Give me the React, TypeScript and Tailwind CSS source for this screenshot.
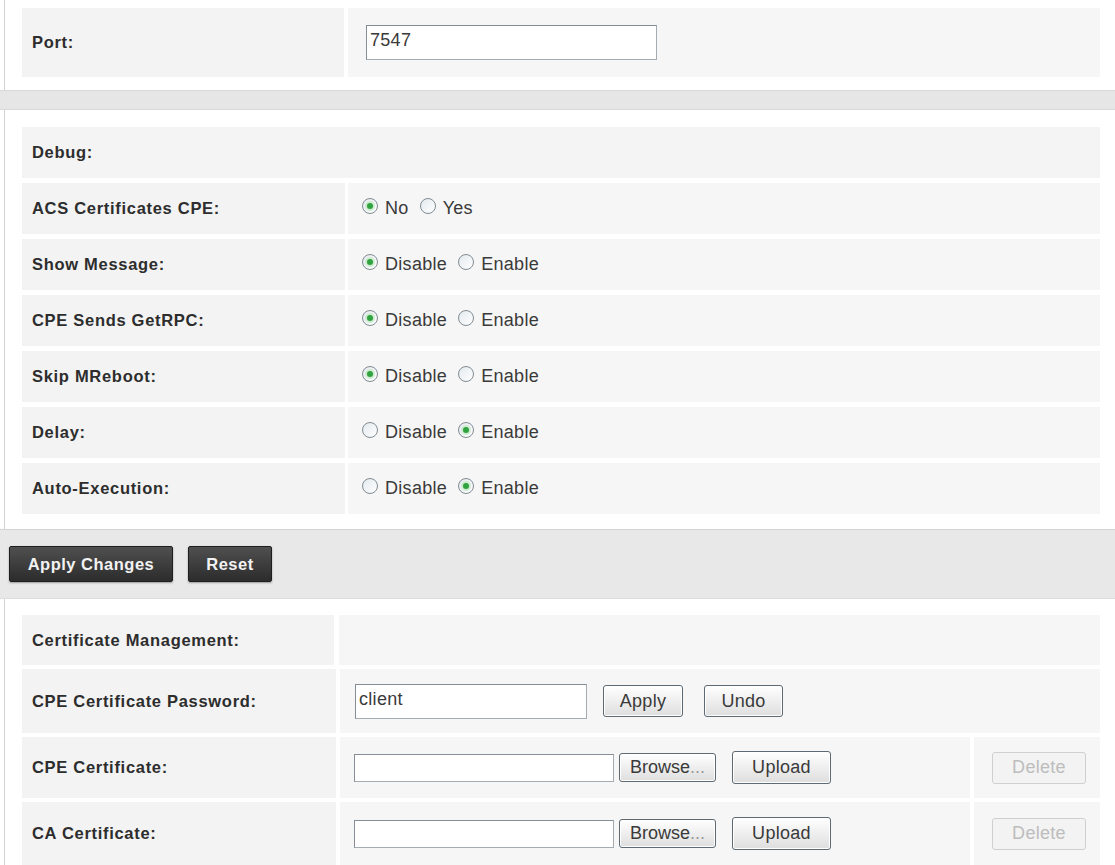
import React from 'react';

const font = "font-['Liberation_Sans',Arial,sans-serif]";
const labelText = 'font-bold text-[16.5px] tracking-[0.7px] text-[#2d2d2d]';
const valueText = 'text-[18px] tracking-[0.3px] text-[#3a3a3a]';

const Radio = ({ checked }: { checked?: boolean }) => (
  <span className="inline-flex w-[16px] h-[16px] shrink-0 -translate-y-[3px] items-center justify-center rounded-full border border-[#7f8b93] bg-gradient-to-br from-[#e4eaee] to-white">
    {checked && <span className="w-[6px] h-[6px] rounded-full bg-[#2ea43f] shadow-[0_0_0_2px_#cfeacf]" />}
  </span>
);

const RadioPair = ({ a, b, first }: { a: string; b: string; first: boolean }) => (
  <div className={`flex items-center ${valueText}`}>
    <Radio checked={first} />
    <span className="ml-[7px] mr-[11px]">{a}</span>
    <Radio checked={!first} />
    <span className="ml-[7px]">{b}</span>
  </div>
);

const TextBox = ({ value, className }: { value?: string; className: string }) => (
  <div className={`flex items-center bg-white border border-[#a4acb3] border-t-[#858e96] border-l-[#858e96] pl-[3px] pb-[4px] ${valueText} ${className}`}>
    {value}
  </div>
);

const GreyButton = ({ children, className }: { children: React.ReactNode; className: string }) => (
  <button className={`flex items-center justify-center rounded-[3px] border border-[#5e6a73] bg-gradient-to-b from-white to-[#dedede] shadow-[inset_0_0_0_1px_#ffffff] ${valueText} text-[#2b2b2b] ${className}`}>
    {children}
  </button>
);

const DeleteButton = () => (
  <button className={`flex items-center justify-center w-[94px] h-[32px] rounded-[3px] border border-[#cfcfcf] bg-[#f3f3f3] ${valueText} text-[#bdbdbd]`}>
    Delete
  </button>
);

const DarkButton = ({ children, className }: { children: React.ReactNode; className: string }) => (
  <button className={`flex items-center justify-center h-[36px] rounded-[2px] border border-[#1e1e1e] bg-gradient-to-b from-[#505050] to-[#2c2c2c] shadow-[0_1px_2px_rgba(0,0,0,0.35)] font-bold text-[16.5px] tracking-[0.5px] text-[#f2f2f2] ${className}`}>
    {children}
  </button>
);

const debugRows: { label: string; a: string; b: string; first: boolean }[] = [
  { label: 'ACS Certificates CPE:', a: 'No', b: 'Yes', first: true },
  { label: 'Show Message:', a: 'Disable', b: 'Enable', first: true },
  { label: 'CPE Sends GetRPC:', a: 'Disable', b: 'Enable', first: true },
  { label: 'Skip MReboot:', a: 'Disable', b: 'Enable', first: true },
  { label: 'Delay:', a: 'Disable', b: 'Enable', first: false },
  { label: 'Auto-Execution:', a: 'Disable', b: 'Enable', first: false },
];

const FileRow = ({ label, h }: { label: string; h: string }) => (
  <div className={`flex gap-[4px] ${h}`}>
    <div className={`w-[314px] bg-[#f3f3f3] flex items-center pl-[10px] ${labelText}`}>{label}</div>
    <div className="w-[630px] bg-[#f6f6f6] flex items-center pl-[14px]">
      <TextBox className="w-[260px] h-[28px]" />
      <GreyButton className="ml-[5px] w-[97px] h-[29px] text-[17px] tracking-[0px]">
        Browse<span className="text-[#9a9a9a]">...</span>
      </GreyButton>
      <GreyButton className="ml-[16px] w-[99px] h-[33px]">Upload</GreyButton>
    </div>
    <div className="flex-1 bg-[#f6f6f6] flex items-center pl-[18px]">
      <DeleteButton />
    </div>
  </div>
);

export default function App() {
  return (
    <div className={`w-[1115px] h-[865px] overflow-hidden bg-white ${font}`}>
      {/* Port */}
      <div className="ml-[4px] border-l border-[#d4d4d4] pl-[17px] pr-[15px] pt-[8px] pb-[13px]">
        <div className="flex gap-[4px] h-[69px]">
          <div className={`w-[322px] bg-[#f3f3f3] flex items-center pl-[10px] ${labelText}`}>Port:</div>
          <div className="flex-1 bg-[#f6f6f6] flex items-center pl-[18px]">
            <TextBox value="7547" className="w-[291px] h-[35px]" />
          </div>
        </div>
      </div>

      <div className="h-[20px] bg-[#e6e6e6] border-y border-[#d9d9d9]" />

      {/* Debug */}
      <div className="ml-[4px] border-l border-[#d4d4d4] pl-[17px] pr-[15px] pt-[17px] pb-[15px] flex flex-col gap-[5px]">
        <div className={`h-[51px] bg-[#f4f4f4] flex items-center pl-[10px] ${labelText}`}>Debug:</div>
        {debugRows.map((r) => (
          <div key={r.label} className="flex gap-[3px] h-[51px]">
            <div className={`w-[323px] bg-[#f3f3f3] flex items-center pl-[10px] ${labelText}`}>{r.label}</div>
            <div className="flex-1 bg-[#f6f6f6] flex items-center pl-[14px]">
              <RadioPair a={r.a} b={r.b} first={r.first} />
            </div>
          </div>
        ))}
      </div>

      {/* Buttons */}
      <div className="h-[70px] bg-[#e8e8e8] border-t border-[#d3d3d3] border-b border-b-[#dedede] flex items-start pt-[16px] pl-[9px] gap-[15px]">
        <DarkButton className="w-[164px]">Apply Changes</DarkButton>
        <DarkButton className="w-[84px]">Reset</DarkButton>
      </div>

      {/* Certificates */}
      <div className="ml-[4px] border-l border-[#d4d4d4] pl-[17px] pr-[15px] pt-[16px] flex flex-col gap-[4px]">
        <div className="flex gap-[5px] h-[50px]">
          <div className={`w-[312px] bg-[#f3f3f3] flex items-center pl-[10px] ${labelText}`}>Certificate Management:</div>
          <div className="flex-1 bg-[#f6f6f6]" />
        </div>
        <div className="flex gap-[4px] h-[64px]">
          <div className={`w-[314px] bg-[#f3f3f3] flex items-center pl-[10px] ${labelText}`}>CPE Certificate Password:</div>
          <div className="flex-1 bg-[#f6f6f6] flex items-center pl-[15px]">
            <TextBox value="client" className="w-[232px] h-[35px]" />
            <GreyButton className="ml-[16px] w-[80px] h-[32px]">Apply</GreyButton>
            <GreyButton className="ml-[21px] w-[79px] h-[32px]">Undo</GreyButton>
          </div>
        </div>
        <FileRow label="CPE Certificate:" h="h-[61px]" />
        <FileRow label="CA Certificate:" h="h-[63px]" />
      </div>
    </div>
  );
}
